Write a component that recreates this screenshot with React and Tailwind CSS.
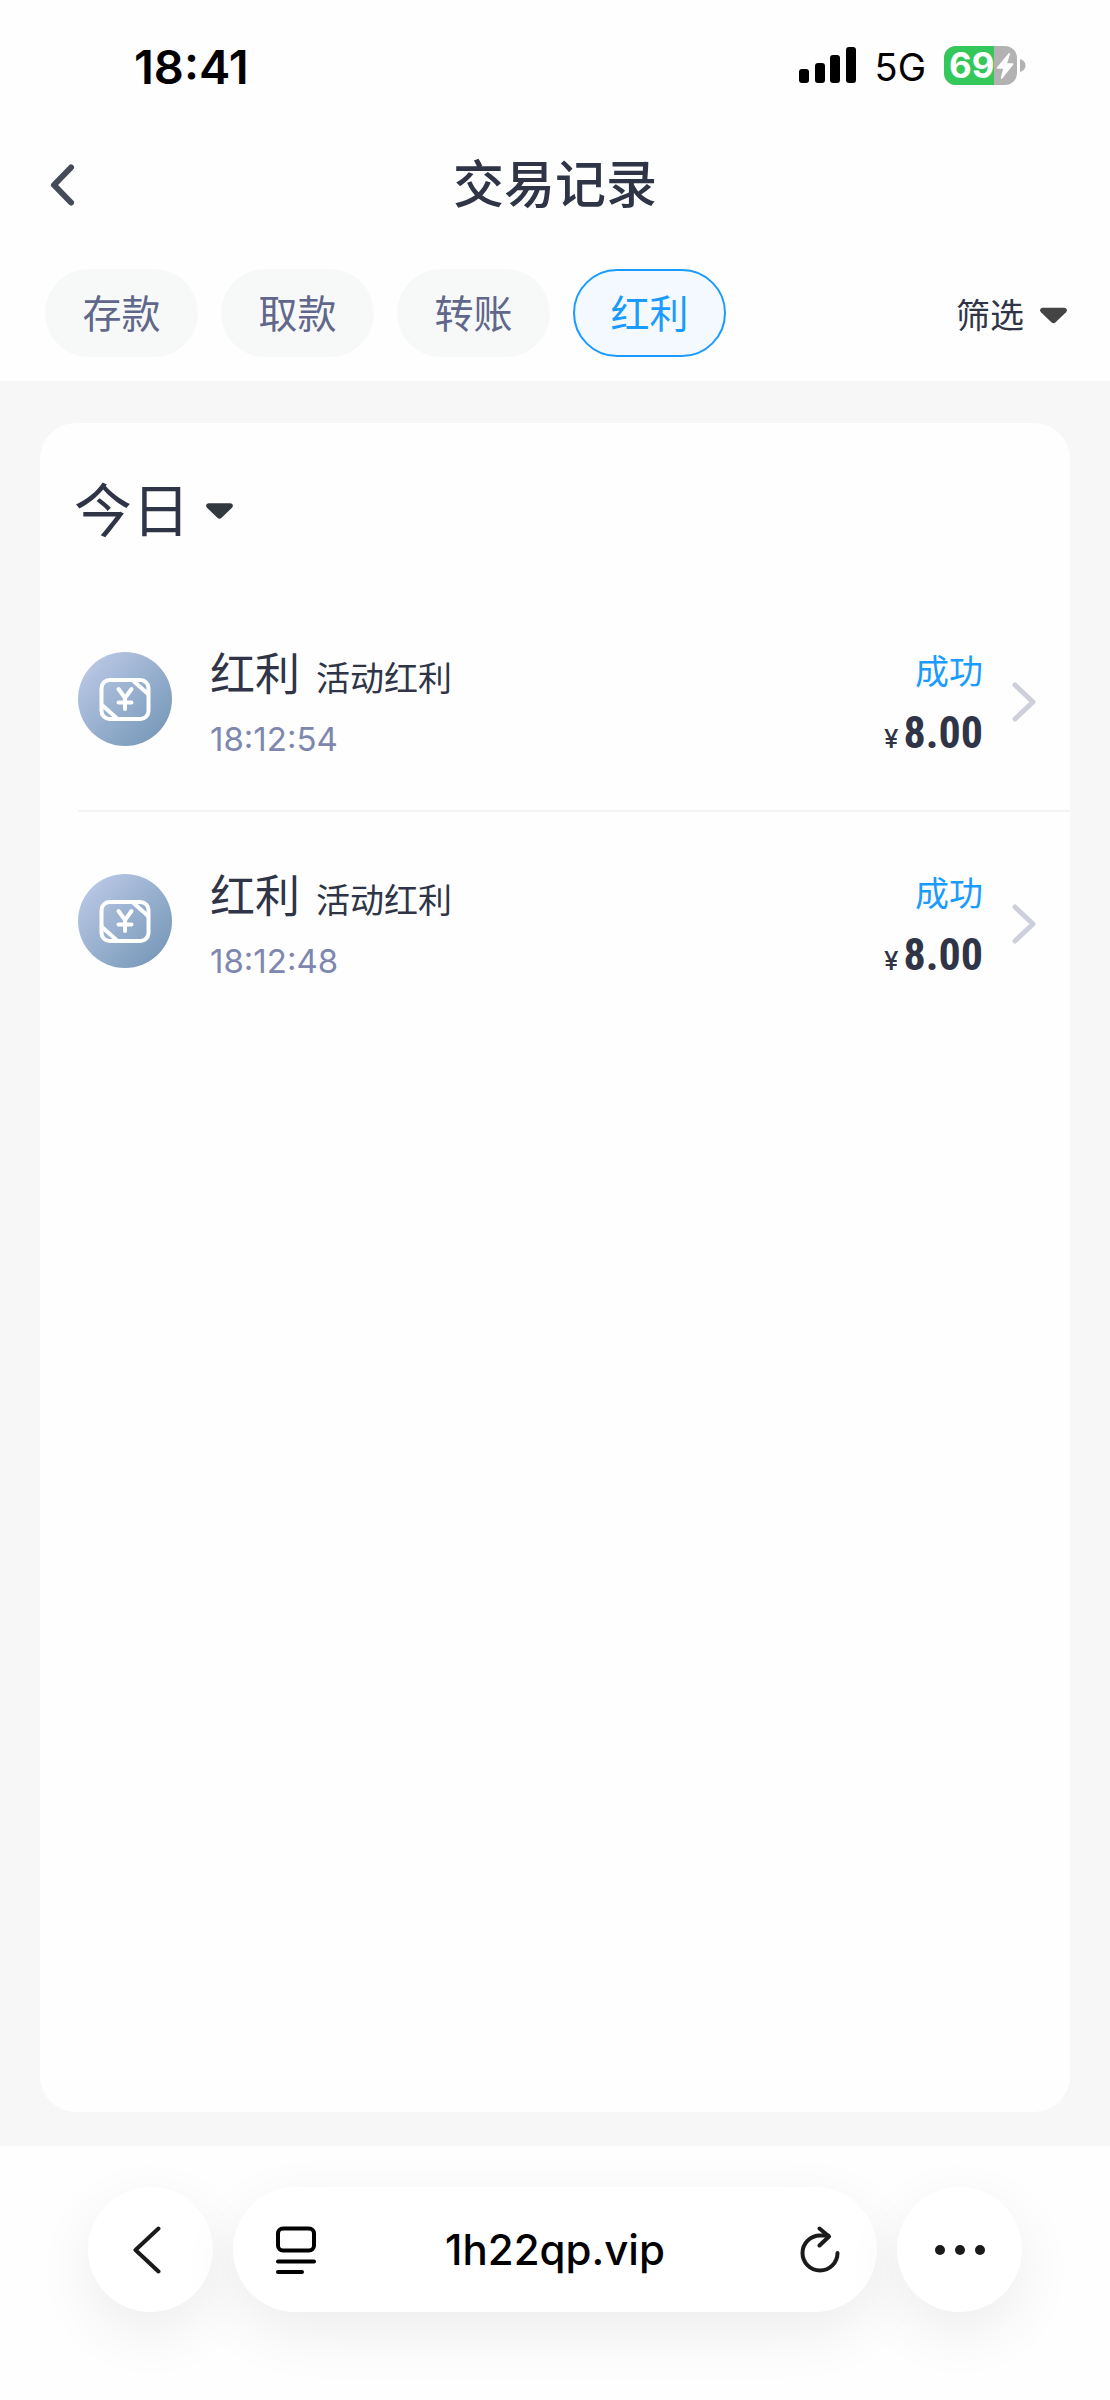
import React, { useState } from 'react';

const TABS = ['存款', '取款', '转账', '红利'];

const RECORDS = [
  { id: 1, type: '红利', detail: '活动红利', time: '18:12:54', status: '成功', amount: '8.00' },
  { id: 2, type: '红利', detail: '活动红利', time: '18:12:48', status: '成功', amount: '8.00' },
];

const BAR_SHADOW = 'shadow-[0_20px_60px_rgba(0,0,0,0.07)]';

function Caret({ className }) {
  return (
    <svg viewBox="0 0 28 16" className={className} fill="currentColor" aria-hidden="true">
      <path d="M3 0h22c2.600 0 3.800 2.800 2 4.600L16.200 15a3.200 3.200 0 0 1-4.400 0L1 4.600C-.8 2.800.4 0 3 0Z" />
    </svg>
  );
}

function StatusBar() {
  return (
    <div className="h-[132px] pl-[134px] pr-[84px] pt-[39px] flex justify-between text-black">
      <span className="text-[47px] leading-[56px] font-semibold">18:41</span>
      <div className="flex items-center h-[52px]">
        <svg width="58" height="36" viewBox="0 0 58 36" aria-hidden="true">
          <rect x="0" y="22" width="10" height="14" rx="3" />
          <rect x="16" y="16" width="10" height="20" rx="3" />
          <rect x="31" y="8" width="10" height="28" rx="3" />
          <rect x="47" y="0" width="10" height="36" rx="3" />
        </svg>
        <span className="ml-[18px] text-[38px] leading-[52px] pt-1">5G</span>
        <div className="relative ml-[18px] w-[73px] h-[39px] rounded-[12px] bg-[#b2b2b2] flex items-center">
          <div className="absolute inset-y-0 left-0 rounded-l-[12px] bg-[#34c759]" style={{ width: '69%' }} />
          <span className="relative pl-[5px] text-[35px] leading-[39px] font-bold text-white">69</span>
          <svg className="absolute right-[3px] top-[7px]" width="18" height="26" viewBox="0 0 18 26" fill="#fff" aria-hidden="true">
            <path d="M12.500.4 1 14.300c-.6.800-.2 1.500.6 1.500h5.600L4.800 24.700c-.3 1.100.8 1.600 1.500.800L17.200 11.800c.6-.8.200-1.600-.7-1.600h-5.300l2.700-9c.3-1-.8-1.500-1.400-.8Z" />
          </svg>
        </div>
        <svg className="ml-[3px]" width="6" height="13" viewBox="0 0 6 13" fill="#b2b2b2" aria-hidden="true">
          <path d="M0 0c3.500 1 5.500 3.500 5.500 6.500S3.500 12 0 13Z" />
        </svg>
      </div>
    </div>
  );
}

function BonusIcon() {
  return (
    <svg className="w-[94px] h-[94px] flex-shrink-0" viewBox="0 0 94 94" fill="none" aria-hidden="true">
      <defs>
        <linearGradient id="bonusBg" x1="12" y1="12" x2="82" y2="82" gradientUnits="userSpaceOnUse">
          <stop stopColor="#b7c6e4" />
          <stop offset="1" stopColor="#7a9aba" />
        </linearGradient>
      </defs>
      <circle cx="47" cy="47" r="47" fill="url(#bonusBg)" />
      <g stroke="#fff" strokeWidth="4" strokeLinecap="round" strokeLinejoin="round">
        <rect x="23.500" y="28" width="47" height="39" rx="8" />
        <path d="M55.500 29 70 42M24 53l14.500 13" />
        <path d="M40.500 37 47 46l6.500-9M47 46v11M40.500 50.500h13" />
      </g>
    </svg>
  );
}

function RecordRow({ record }) {
  return (
    <button className="w-full h-[220px] pb-[3px] pr-[34px] flex items-center text-left">
      <BonusIcon />
      <span className="ml-[38px] pt-[12px] flex-1 min-w-0 flex flex-col">
        <span className="flex items-baseline gap-[16px] text-[#2f3547]">
          <span className="text-[45px] leading-[64px]">{record.type}</span>
          <span className="text-[34px] leading-[64px]">{record.detail}</span>
        </span>
        <span className="text-[33px] leading-[56px] text-[#8087ae]">{record.time}</span>
      </span>
      <span className="pt-[14px] flex flex-col items-end">
        <span className="text-[34px] leading-[60px] text-[#1a9bff]">{record.status}</span>
        <span className="flex items-baseline gap-[5px] leading-[62px] text-[#2f3547]">
          <span className="text-[26px] font-medium">¥</span>
          <span className="text-[44px] font-bold font-['Roboto_Condensed','Liberation_Sans_Narrow',sans-serif]">{record.amount}</span>
        </span>
      </span>
      <svg className="ml-[29px] mt-[6px]" width="24" height="40" viewBox="0 0 24 40" fill="none" stroke="#cdd0dc" strokeWidth="5" strokeLinecap="round" strokeLinejoin="round" aria-hidden="true">
        <path d="M3 3l18 17L3 37" />
      </svg>
    </button>
  );
}

function BrowserBar() {
  return (
    <nav className="h-[254px] px-[88px] pt-[41px] flex items-start gap-[20px] bg-[#fefefe] overflow-hidden">
      <button aria-label="后退" className={`w-[125px] h-[125px] rounded-full bg-white flex items-center justify-center flex-shrink-0 ${BAR_SHADOW}`}>
        <svg className="mr-[8px]" width="28" height="48" viewBox="0 0 28 48" fill="none" stroke="#1a1a1a" strokeWidth="4" strokeLinecap="round" strokeLinejoin="round" aria-hidden="true">
          <path d="M25.500 2.500 2.500 24l23 21.500" />
        </svg>
      </button>
      <div className={`h-[125px] flex-1 min-w-0 pl-[43px] pr-[37px] rounded-full bg-white flex items-center justify-between ${BAR_SHADOW}`}>
        <button aria-label="页面设置" className="flex-shrink-0">
          <svg width="40" height="48" viewBox="0 0 40 48" fill="none" stroke="#000" strokeWidth="4" strokeLinecap="round" aria-hidden="true">
            <rect x="2" y="2.500" width="36" height="22" rx="5" />
            <path d="M2 35.500h36M2 46h24" />
          </svg>
        </button>
        <input
          aria-label="网址"
          defaultValue="1h22qp.vip"
          className="flex-1 min-w-0 pr-[6px] text-center text-[42px] leading-[60px] font-medium text-black bg-transparent outline-none"
        />
        <button aria-label="刷新" className="flex-shrink-0">
          <svg width="40" height="48" viewBox="0 0 40 48" fill="none" stroke="#1a1a1a" strokeWidth="4" strokeLinecap="round" strokeLinejoin="round" aria-hidden="true">
            <path d="M37.500 27A17.500 17.500 0 1 1 20 9.500h8" />
            <path d="M19.500 2.500 29 10.500 19.500 19.500" />
          </svg>
        </button>
      </div>
      <button aria-label="更多" className={`w-[125px] h-[125px] rounded-full bg-white flex items-center justify-center gap-[10px] flex-shrink-0 ${BAR_SHADOW}`}>
        {[0, 1, 2].map(i => (
          <span key={i} className="w-[10px] h-[10px] rounded-full bg-[#1a1a1a]" />
        ))}
      </button>
    </nav>
  );
}

export default function App() {
  const [tab, setTab] = useState('红利');

  return (
    <div className="min-h-screen flex flex-col bg-[#f7f7f7] font-['Inter','Noto_Sans_CJK_SC',sans-serif]">
      <header className="bg-[#fefefe]">
        <StatusBar />
        <div className="h-[105px] px-[48px] grid grid-cols-[1fr_auto_1fr] items-center">
          <button aria-label="返回" className="justify-self-start">
            <svg width="28" height="44" viewBox="0 0 28 44" fill="none" stroke="#454b5b" strokeWidth="6" strokeLinecap="round" strokeLinejoin="round" aria-hidden="true">
              <path d="M23 4.500 6 22l17 17.500" />
            </svg>
          </button>
          <h1 className="text-[51px] leading-[70px] font-medium text-[#2f3547]">交易记录</h1>
        </div>
        <div className="h-[144px] pt-[32px] pl-[45px] pr-[43px] flex items-start justify-between">
          <div className="flex gap-[23px]">
            {TABS.map(t => (
              <button
                key={t}
                onClick={() => setTab(t)}
                className={`w-[153px] h-[88px] pt-[2px] rounded-full text-[39px] leading-[60px] ${
                  tab === t ? 'border-2 border-[#1a9bff] bg-[#f3f9ff] text-[#1a9bff]' : 'bg-[#f7f9f9] text-[#60678a]'
                }`}
              >
                {t}
              </button>
            ))}
          </div>
          <button className="h-[88px] pt-[4px] flex items-center gap-[16px] text-[34px] text-[#2f3547]">
            筛选
            <Caret className="w-[27px] h-[17px] text-[#444444]" />
          </button>
        </div>
      </header>

      <main className="flex-1 px-[40px] pt-[42px] pb-[34px] flex flex-col">
        <section className="flex-1 rounded-[36px] bg-[#fefefe] overflow-hidden">
          <label className="h-[167px] pl-[34px] pt-[8px] flex items-center text-[#2f3547]">
            <select aria-label="日期" className="appearance-none field-sizing-content bg-transparent outline-none text-[58px] leading-[80px] font-normal">
              <option>今日</option>
            </select>
            <Caret className="ml-[16px] w-[27px] h-[16px] text-[#303840]" />
          </label>
          <ul className="pl-[38px]">
            {RECORDS.map(r => (
              <li key={r.id} className="border-b-2 border-[#f4f4f5] last:border-b-0">
                <RecordRow record={r} />
              </li>
            ))}
          </ul>
        </section>
      </main>

      <BrowserBar />
    </div>
  );
}
